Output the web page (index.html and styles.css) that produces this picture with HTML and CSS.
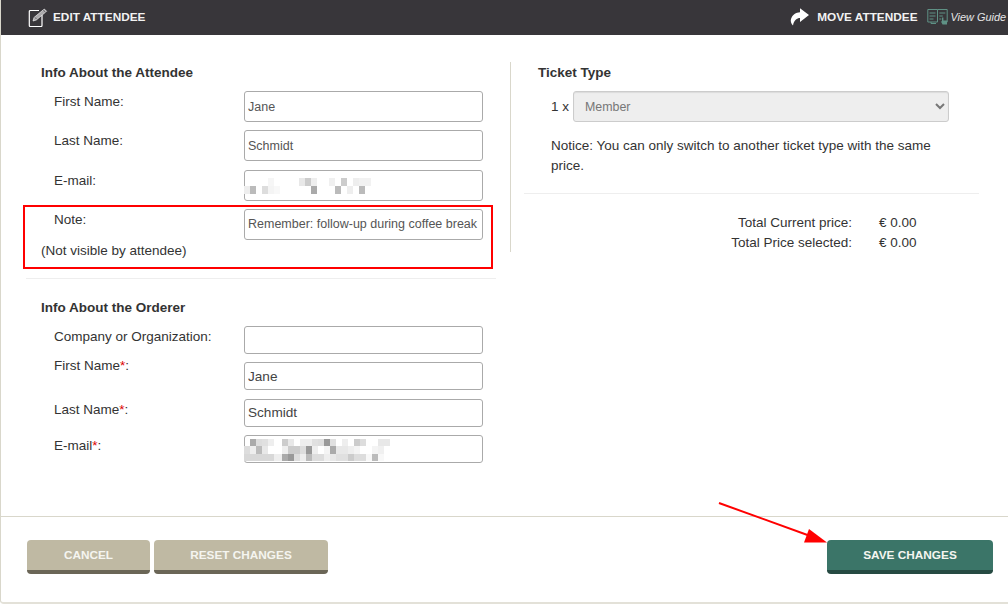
FILE: index.html
```html
<!DOCTYPE html>
<html lang="en">
<head>
    <meta charset="UTF-8">
    <meta name="viewport" content="width=device-width, initial-scale=1.0">
    <title>Edit Attendee</title>
    <link rel="stylesheet" href="styles.css">
</head>
<body>
  <div class="modal">

    <div class="modal-head">
      <svg class="icon-edit" width="20" height="20" viewBox="0 0 20 20">
        <path d="M11 3.500H2.300a1 1 0 0 0-1 1v14a1 1 0 0 0 1 1h10.700a1 1 0 0 0 1-1V8" fill="none" stroke="#fff" stroke-width="1.200"/>
        <path d="M5 14l1-3.500L16.300 2l2.300 2.300L8.300 13z" fill="#aaa8aa" stroke="#fff" stroke-width=".6"/>
        <path d="M6.800 10.300l1.700 1.700M15.200 3l2.300 2.300" stroke="#38363a" stroke-width=".6"/>
      </svg>
      <span class="head-title">EDIT ATTENDEE</span>
      <span class="head-right">
        <svg class="icon-move" width="20" height="19" viewBox="0 0 20 19">
          <path d="M10 1.300L19 8l-9 7v-4C7 11 4 13 3 18.500 1 16.500 .3 14 1 12 2.500 7.500 6 5.500 10 5.300z" fill="#fff"/>
        </svg>
        <span class="head-title">MOVE ATTENDEE</span>
        <svg class="icon-guide" width="22" height="18" viewBox="0 0 22 18">
          <g fill="none" stroke="#5f9185" stroke-width="1">
            <path d="M.8 1.500h9.700v12.500H.8zM10.500 1.500h9.700v12.500h-4"/>
            <path d="M2.500 5h6M2.500 8h6M2.500 11h4M12.300 5h6M12.300 8h3.500M12.300 11h2"/>
            <path d="M4 14v1.500h5"/>
          </g>
          <path d="M15 9.500h1.400v3h3.600v4h-4.500l-1.700-3.300 1.200.4z" fill="#5f9185"/>
        </svg>
        <em class="guide-text">View Guide</em>
      </span>
    </div>

    <div class="modal-body">
      <div class="col-left">
        <h3>Info About the Attendee</h3>
        <div class="rows rows-tall">
          <label>First Name:</label>
          <input class="small-text" type="text" value="Jane">
          <label>Last Name:</label>
          <input class="small-text" type="text" value="Schmidt">
          <label>E-mail:</label>
          <div class="blur-box">
            <input type="text">
            <svg class="pixels" width="130" height="16" viewBox="0 0 130 16">
              <g>
                <rect x="24" y="0" width="6" height="8" fill="#f6f6f6"/>
                <rect x="55" y="0" width="6" height="8" fill="#e8e8e8"/>
                <rect x="61" y="0" width="6" height="8" fill="#ccc"/>
                <rect x="67" y="0" width="6" height="8" fill="#eee"/>
                <rect x="85" y="0" width="6" height="8" fill="#f0f0f0"/>
                <rect x="97" y="0" width="6" height="8" fill="#ccc"/>
                <rect x="109" y="0" width="6" height="8" fill="#eee"/>
                <rect x="115" y="0" width="12" height="8" fill="#f2f2f2"/>
                <rect x="0" y="8" width="6" height="8" fill="#eee"/>
                <rect x="6" y="8" width="6" height="8" fill="#bbb"/>
                <rect x="18" y="8" width="6" height="8" fill="#ddd"/>
                <rect x="24" y="8" width="6" height="8" fill="#f4f4f4"/>
                <rect x="30" y="8" width="6" height="8" fill="#f8f8f8"/>
                <rect x="67" y="8" width="6" height="8" fill="#aaa"/>
                <rect x="91" y="8" width="6" height="8" fill="#bbb"/>
                <rect x="103" y="8" width="6" height="8" fill="#eee"/>
                <rect x="115" y="8" width="6" height="8" fill="#bbb"/>
              </g>
            </svg>
          </div>
          <label>Note:</label>
          <input class="small-text" type="text" value="Remember: follow-up during coffee break">
        </div>
        <p class="note-hint">(Not visible by attendee)</p>
        <hr class="rule-left">
        <h3>Info About the Orderer</h3>
        <div class="rows rows-short">
          <label>Company or Organization:</label>
          <input type="text">
          <label class="label-high">First Name<span class="req">*</span>:</label>
          <input type="text" value="Jane">
          <label>Last Name<span class="req">*</span>:</label>
          <input type="text" value="Schmidt">
          <label>E-mail<span class="req">*</span>:</label>
          <div class="blur-box">
            <input type="text">
            <svg class="pixels pixels-big" width="148" height="22" viewBox="0 0 148 22">
              <rect x="6" y="0" width="6" height="7" fill="#aaa"/>
              <rect x="12" y="0" width="6" height="7" fill="#ddd"/>
              <rect x="18" y="0" width="6" height="7" fill="#e0e0e0"/>
              <rect x="24" y="0" width="6" height="7" fill="#eee"/>
              <rect x="38" y="0" width="6" height="7" fill="#ccc"/>
              <rect x="44" y="0" width="6" height="7" fill="#e8e8e8"/>
              <rect x="56" y="0" width="12" height="7" fill="#eee"/>
              <rect x="68" y="0" width="6" height="7" fill="#e0e0e0"/>
              <rect x="74" y="0" width="6" height="7" fill="#ddd"/>
              <rect x="80" y="0" width="6" height="7" fill="#999"/>
              <rect x="86" y="0" width="6" height="7" fill="#e0e0e0"/>
              <rect x="98" y="0" width="6" height="7" fill="#eee"/>
              <rect x="110" y="0" width="6" height="7" fill="#ccc"/>
              <rect x="116" y="0" width="6" height="7" fill="#ddd"/>
              <rect x="134" y="0" width="12" height="7" fill="#e8e8e8"/>
              <rect x="0" y="7" width="6" height="8" fill="#ddd"/>
              <rect x="6" y="7" width="6" height="8" fill="#eee"/>
              <rect x="12" y="7" width="6" height="8" fill="#bbb"/>
              <rect x="18" y="7" width="6" height="8" fill="#e8e8e8"/>
              <rect x="38" y="7" width="6" height="8" fill="#eee"/>
              <rect x="44" y="7" width="12" height="8" fill="#ccc"/>
              <rect x="56" y="7" width="6" height="8" fill="#ddd"/>
              <rect x="62" y="7" width="6" height="8" fill="#999"/>
              <rect x="68" y="7" width="6" height="8" fill="#eee"/>
              <rect x="80" y="7" width="6" height="8" fill="#f4f4f4"/>
              <rect x="86" y="7" width="6" height="8" fill="#aaa"/>
              <rect x="92" y="7" width="12" height="8" fill="#e8e8e8"/>
              <rect x="104" y="7" width="6" height="8" fill="#eee"/>
              <rect x="110" y="7" width="6" height="8" fill="#f4f4f4"/>
              <rect x="128" y="7" width="6" height="8" fill="#f4f4f4"/>
              <rect x="134" y="7" width="6" height="8" fill="#f0f0f0"/>
              <rect x="0" y="15" width="30" height="7" fill="#d8d8d8"/>
              <rect x="30" y="15" width="8" height="7" fill="#eee"/>
              <rect x="38" y="15" width="6" height="7" fill="#aaa"/>
              <rect x="44" y="15" width="6" height="7" fill="#999"/>
              <rect x="50" y="15" width="6" height="7" fill="#ddd"/>
              <rect x="56" y="15" width="6" height="7" fill="#eee"/>
              <rect x="62" y="15" width="6" height="7" fill="#bbb"/>
              <rect x="68" y="15" width="12" height="7" fill="#ddd"/>
              <rect x="80" y="15" width="6" height="7" fill="#eee"/>
              <rect x="86" y="15" width="6" height="7" fill="#e8e8e8"/>
              <rect x="92" y="15" width="12" height="7" fill="#e0e0e0"/>
              <rect x="104" y="15" width="6" height="7" fill="#ccc"/>
              <rect x="110" y="15" width="12" height="7" fill="#ddd"/>
              <rect x="122" y="15" width="6" height="7" fill="#f8f8f8"/>
              <rect x="128" y="15" width="6" height="7" fill="#bbb"/>
              <rect x="134" y="15" width="6" height="7" fill="#f8f8f8"/>
            </svg>
          </div>
        </div>
      </div>

      <div class="col-right">
        <h3>Ticket Type</h3>
        <div class="ticket-row">
          <span>1 x</span>
          <select class="ticket-select">
            <option>Member</option>
          </select>
        </div>
        <p class="notice">Notice: You can only switch to another ticket type with the same price.</p>
        <hr class="rule-right">
        <div class="totals">
          <span>Total Current price:</span><span>€ 0.00</span>
          <span>Total Price selected:</span><span>€ 0.00</span>
        </div>
      </div>
    </div>

    <div class="modal-foot">
      <button class="btn btn-grey btn-cancel">CANCEL</button>
      <button class="btn btn-grey btn-reset">RESET CHANGES</button>
      <button class="btn btn-green">SAVE CHANGES</button>
    </div>
  </div>

  <!-- annotations on top of the screenshot -->
  <div class="red-box"></div>
  <svg class="red-arrow" width="120" height="50" viewBox="0 0 120 50">
    <path d="M1 1L95 35" stroke="#f00" stroke-width="2" fill="none"/>
    <path d="M109 40.500L86 40.500 91 27z" fill="#f00"/>
  </svg>
</body>
</html>
```

FILE: styles.css
```css
* {
  box-sizing: border-box;
}

html, body {
  height: 100%;
}

body {
  margin: 0;
  background: #fff;
  font-family: "Liberation Sans", Arial, sans-serif;
  font-size: 13.5px;
  color: #333;
  overflow: hidden;
}

.modal {
  width: 1008px;
  height: 604px;
  display: flex;
  flex-direction: column;
  border-left: 1px solid #d9d7cb;
  border-bottom: 2px solid #e3e1d8;
  border-bottom-left-radius: 4px;
}

.modal-head {
  height: 35px;
  background: #38363a;
  display: flex;
  align-items: center;
  padding: 0 0 2px 27px;
  color: #fff;
  flex-shrink: 0;
}

.icon-edit {
  margin-right: 5px;
  margin-top: 1px;
}

.head-title {
  font-size: 11.8px;
  font-weight: bold;
  color: #f2f2f2;
}

.head-right {
  margin-left: auto;
  display: flex;
  align-items: center;
}

.icon-move {
  margin-right: 7px;
}

.icon-guide {
  margin: 0 2px 0 9px;
}

.guide-text {
  font-size: 10.9px;
  color: #e6e6e6;
  margin-right: 2px;
}

.modal-body {
  flex: 1;
  display: flex;
  padding-top: 27px;
}

h3 {
  margin: 1px 0 0;
  font-size: 13.5px;
  font-weight: bold;
  line-height: 20px;
}

.col-left {
  width: 495px;
  padding-left: 40px;
}

.rows {
  display: grid;
  grid-template-columns: 203px 239px;
}

.rows label {
  padding-left: 13px;
  padding-top: 1px;
  line-height: 20px;
}

.rows-tall {
  margin-top: 8px;
  grid-auto-rows: 31px;
  row-gap: 8.33px;
}

.rows-short {
  margin-top: 8px;
  grid-auto-rows: 28px;
  row-gap: 8.33px;
}

/* this one sits higher than its input in the original form */
.rows-short .label-high {
  margin-top: -7px;
}

.req {
  color: #d00;
}

.rows input {
  width: 100%;
  height: 100%;
  padding: 0 3px;
  border: 1px solid #aaa;
  border-radius: 3px;
  font-family: inherit;
  font-size: 13.6px;
  color: #444;
  background: #fff;
  outline: 0;
}

.rows input.small-text {
  font-size: 12.5px;
  color: #555;
}

.blur-box {
  position: relative;
}

.pixels {
  position: absolute;
  left: 0;
  top: 8px;
}

.pixels-big {
  top: 4px;
}

.note-hint {
  margin: 1px 0 0;
  line-height: 20px;
  height: 20px;
}

.rule-left {
  border: 0;
  border-top: 1px solid #eee;
  margin: 17px 0 19px -15px;
  width: 470px;
}

.col-right {
  width: 469px;
  margin-left: 14px;
  height: 190px;
  border-left: 1px solid #d9d7cb;
  padding-left: 27px;
}

.ticket-row {
  display: flex;
  align-items: center;
  gap: 4px;
  margin: 8px 0 0 13px;
  height: 31px;
}

.ticket-select {
  width: 376px;
  height: 31px;
  padding-left: 7px;
  border: 1px solid #ccc;
  border-radius: 3px;
  background: #eee;
  color: #777;
  font-family: inherit;
  font-size: 12.4px;
  box-shadow: inset 0 1px 1px rgba(0, 0, 0, 0.08);
}

.notice {
  margin: 14px 0 0 13px;
  width: 395px;
  line-height: 20px;
}

.rule-right {
  border: 0;
  border-top: 1px solid #eee;
  margin: 17px 0 0 -14px;
  width: 455px;
}

.totals {
  display: grid;
  grid-template-columns: 314px 64px;
  column-gap: 27px;
  line-height: 20px;
  margin-top: 19px;
}

.totals span:nth-child(odd) {
  text-align: right;
}

.modal-foot {
  height: 86px;
  flex-shrink: 0;
  border-top: 1px solid #d9d7cb;
  display: flex;
  gap: 4px;
  padding: 23px 15px 0 26px;
}

.btn {
  height: 34px;
  border: 0;
  border-bottom: 4px solid;
  border-radius: 4px;
  color: #f5f5f0;
  font-family: inherit;
  font-size: 11.8px;
  font-weight: bold;
  cursor: pointer;
}

.btn-grey {
  background: #bfb9a3;
  border-color: #6b6657;
}

.btn-cancel {
  width: 123px;
}

.btn-reset {
  width: 174px;
}

.btn-green {
  width: 166px;
  margin-left: auto;
  background: #3b7568;
  border-color: #264a42;
}

.red-box {
  position: absolute;
  left: 23px;
  top: 205px;
  width: 470px;
  height: 64px;
  border: 2px solid #f00;
}

.red-arrow {
  position: absolute;
  left: 718px;
  top: 502px;
}
```
